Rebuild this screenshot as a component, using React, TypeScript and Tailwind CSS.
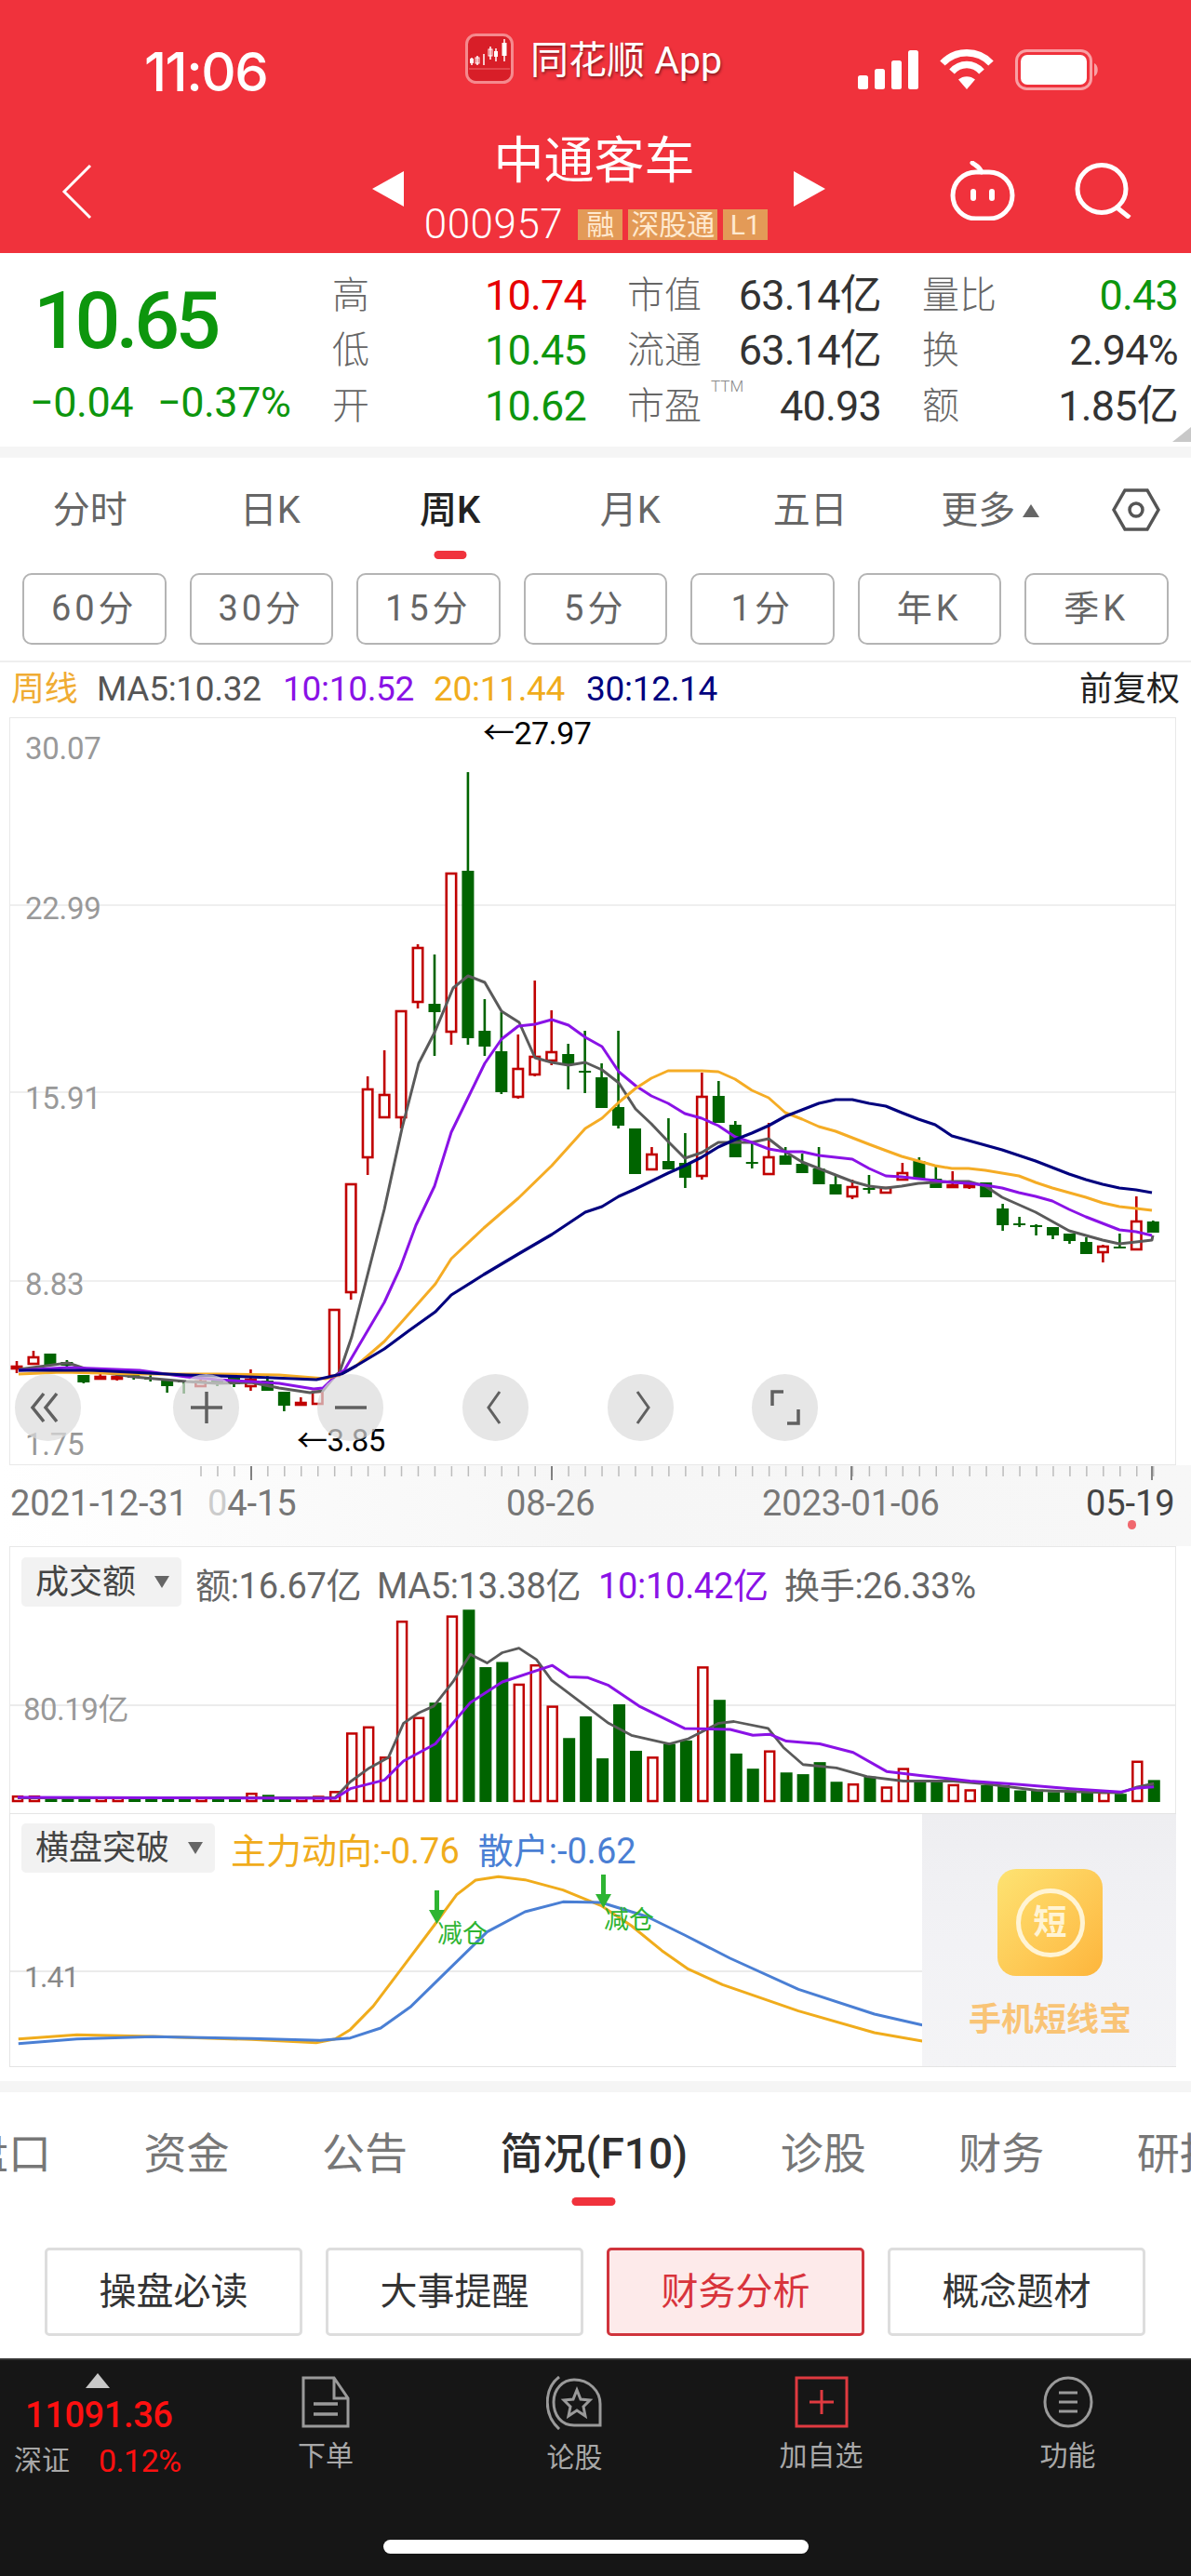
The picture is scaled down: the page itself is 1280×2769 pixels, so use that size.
import React from "react";

type C = [number, number, number, number, "r" | "g"];
const candles: C[] = [
  [1463, 1469, 1471, 1476, "r"], [1452, 1459, 1466, 1466, "r"], [1455, 1455, 1468, 1468, "g"], [1462, 1464, 1468, 1470, "g"],
  [1478, 1478, 1486, 1487, "g"], [1477, 1480, 1482, 1483, "r"], [1477, 1480, 1482, 1484, "r"], [1476, 1476, 1481, 1483, "g"],
  [1477, 1481, 1483, 1485, "g"], [1483, 1483, 1490, 1497, "g"], [1484, 1484, 1486, 1498, "g"], [1483, 1485, 1490, 1491, "r"],
  [1483, 1484, 1486, 1490, "g"], [1480, 1480, 1488, 1491, "g"], [1472, 1483, 1490, 1495, "r"], [1477, 1484, 1495, 1495, "g"],
  [1496, 1496, 1511, 1517, "g"], [1502, 1508, 1510, 1510, "r"], [1496, 1496, 1509, 1509, "r"], [1408, 1408, 1479, 1479, "r"],
  [1273, 1273, 1389, 1397, "r"], [1157, 1171, 1244, 1263, "r"], [1129, 1177, 1201, 1201, "r"], [1087, 1087, 1201, 1213, "r"],
  [1015, 1019, 1077, 1084, "r"], [1026, 1079, 1088, 1135, "g"], [939, 939, 1109, 1123, "r"], [830, 936, 1116, 1123, "g"],
  [1074, 1108, 1125, 1135, "g"], [1088, 1130, 1174, 1176, "g"], [1112, 1149, 1179, 1181, "r"], [1054, 1136, 1155, 1157, "r"],
  [1086, 1131, 1140, 1145, "r"], [1122, 1133, 1145, 1171, "g"], [1108, 1151, 1153, 1175, "g"], [1143, 1158, 1191, 1191, "g"],
  [1108, 1190, 1210, 1213, "g"], [1213, 1213, 1262, 1262, "g"], [1233, 1241, 1257, 1257, "r"], [1202, 1248, 1257, 1257, "g"],
  [1218, 1250, 1266, 1277, "g"], [1153, 1179, 1264, 1268, "r"], [1162, 1178, 1207, 1207, "g"], [1205, 1209, 1244, 1244, "g"],
  [1228, 1249, 1251, 1256, "g"], [1207, 1244, 1262, 1263, "r"], [1233, 1242, 1252, 1252, "g"], [1240, 1251, 1261, 1261, "g"],
  [1233, 1256, 1273, 1273, "g"], [1263, 1273, 1284, 1284, "g"], [1268, 1276, 1286, 1289, "r"], [1263, 1277, 1279, 1283, "g"],
  [1277, 1277, 1282, 1283, "r"], [1250, 1261, 1268, 1269, "r"], [1244, 1248, 1267, 1267, "g"], [1254, 1267, 1277, 1277, "g"],
  [1259, 1274, 1276, 1276, "r"], [1272, 1274, 1276, 1278, "r"], [1271, 1271, 1287, 1287, "g"], [1294, 1299, 1317, 1323, "g"],
  [1308, 1315, 1317, 1319, "g"], [1316, 1317, 1319, 1328, "g"], [1319, 1319, 1328, 1332, "g"], [1326, 1326, 1334, 1337, "g"],
  [1330, 1335, 1348, 1348, "g"], [1338, 1340, 1346, 1357, "r"], [1326, 1340, 1342, 1342, "g"], [1286, 1313, 1343, 1343, "r"],
  [1312, 1313, 1325, 1325, "g"],
];

const ma5 = [[20,1472],[73,1465],[97,1473],[143,1480],[200,1485],[233,1487],[270,1486],[300,1492],[333,1497],[347,1495],[360,1479],[365,1475],[378,1437],[413,1300],[432,1213],[450,1143],[467,1110],[487,1062],[503,1049],[521,1056],[539,1087],[558,1099],[575,1137],[593,1142],[611,1145],[629,1142],[647,1150],[665,1164],[683,1192],[700,1208],[718,1227],[736,1245],[754,1239],[772,1228],[790,1228],[808,1228],[826,1224],[844,1238],[862,1249],[880,1256],[898,1263],[916,1270],[934,1275],[952,1277],[969,1275],[987,1272],[1005,1271],[1023,1270],[1041,1270],[1059,1275],[1077,1287],[1095,1295],[1113,1303],[1131,1313],[1149,1323],[1167,1328],[1185,1333],[1203,1337],[1221,1335],[1238,1333],[1239,1328]];
const ma10 = [[20,1473],[73,1470],[100,1471],[150,1473],[200,1480],[233,1483],[270,1485],[300,1487],[337,1493],[347,1492],[363,1477],[370,1473],[413,1400],[430,1363],[447,1317],[467,1275],[485,1217],[503,1180],[521,1143],[539,1117],[557,1103],[575,1101],[593,1096],[611,1102],[629,1115],[647,1125],[665,1152],[683,1167],[700,1178],[718,1186],[736,1197],[754,1202],[772,1210],[790,1222],[808,1228],[826,1235],[844,1238],[862,1238],[880,1242],[898,1244],[916,1246],[934,1256],[952,1264],[969,1265],[987,1267],[1005,1269],[1023,1271],[1041,1272],[1059,1274],[1077,1277],[1095,1282],[1113,1286],[1131,1291],[1149,1300],[1167,1308],[1185,1315],[1203,1322],[1221,1324],[1238,1328]];
const ma20 = [[20,1477],[67,1475],[150,1477],[233,1477],[300,1478],[350,1482],[367,1477],[383,1468],[413,1442],[430,1423],[468,1380],[485,1353],[520,1320],[557,1288],[593,1253],[629,1213],[647,1202],[665,1185],[683,1170],[700,1159],[718,1151],[736,1151],[754,1151],[772,1152],[790,1160],[808,1172],[826,1180],[844,1196],[862,1203],[880,1211],[898,1216],[916,1223],[934,1230],[950,1236],[969,1243],[987,1248],[1005,1253],[1023,1256],[1041,1256],[1059,1258],[1077,1261],[1095,1264],[1113,1271],[1131,1277],[1149,1282],[1167,1287],[1185,1293],[1203,1297],[1221,1299],[1238,1301]];
const ma30 = [[20,1473],[100,1473],[200,1478],[267,1480],[340,1483],[367,1477],[383,1468],[413,1450],[440,1430],[468,1410],[485,1392],[520,1370],[557,1348],[593,1327],[629,1303],[647,1297],[665,1286],[683,1278],[718,1261],[736,1253],[754,1244],[772,1233],[790,1225],[808,1218],[826,1210],[844,1200],[862,1193],[880,1186],[898,1182],[916,1182],[934,1186],[952,1189],[969,1196],[987,1203],[1005,1209],[1023,1221],[1041,1226],[1059,1231],[1077,1236],[1095,1242],[1113,1248],[1131,1255],[1149,1262],[1167,1268],[1185,1273],[1203,1277],[1221,1279],[1238,1282]];

const vols: [number, "r" | "g"][] = [
  [1433,"r"],[1433,"r"],[1435,"g"],[1435,"g"],[1437,"g"],[1436,"r"],[1436,"r"],[1437,"g"],[1437,"g"],[1437,"g"],[1437,"g"],[1437,"r"],[1437,"g"],[1437,"g"],[1425,"r"],[1428,"g"],[1434,"g"],[1436,"r"],[1434,"r"],[1420,"r"],
  [1250,"r"],[1232,"r"],[1320,"r"],[925,"r"],[1205,"r"],[1160,"g"],[910,"r"],[890,"g"],[1057,"g"],[1042,"g"],[1108,"r"],[1052,"r"],[1172,"r"],[1263,"g"],[1200,"g"],[1322,"g"],[1165,"g"],[1300,"g"],[1320,"r"],[1280,"g"],[1270,"g"],[1058,"r"],[1152,"g"],[1308,"g"],[1352,"g"],[1302,"r"],[1363,"g"],[1368,"g"],[1333,"g"],[1390,"g"],[1398,"r"],[1375,"g"],[1407,"r"],[1353,"r"],[1390,"g"],[1385,"g"],[1400,"r"],[1415,"r"],[1400,"g"],[1400,"g"],[1415,"g"],[1413,"g"],[1420,"g"],[1415,"g"],[1420,"g"],[1422,"r"],[1425,"g"],[1332,"r"],[1385,"g"],
];
const volGray = [[22,1437],[440,1436],[460,1390],[485,1350],[510,1320],[530,1220],[550,1190],[570,1170],[595,1100],[618,1020],[640,1045],[660,1015],[682,1002],[705,1035],[725,1095],[770,1170],[800,1220],[830,1255],[880,1280],[905,1265],[945,1220],[965,1215],[1010,1235],[1030,1290],[1056,1340],[1100,1350],[1140,1375],[1188,1388],[1254,1388],[1300,1397],[1364,1415],[1430,1420],[1474,1422],[1496,1405],[1518,1395]];
const volPurple = [[22,1435],[440,1438],[460,1410],[505,1385],[530,1330],[572,1280],[618,1160],[660,1100],[726,1052],[748,1085],[772,1087],[800,1110],[840,1170],[900,1235],[960,1238],[990,1255],[1012,1252],[1034,1272],[1078,1280],[1122,1305],[1166,1360],[1210,1372],[1276,1388],[1342,1398],[1408,1410],[1474,1420],[1496,1408],[1518,1405]];
const indOrange = [[23,725],[100,712],[200,717],[330,727],[415,737],[440,725],[460,695],[490,620],[530,490],[570,360],[600,260],[625,213],[655,202],[690,212],[740,245],[790,295],[830,360],[870,440],[905,500],[950,550],[1050,635],[1150,705],[1213,732]];
const indBlue = [[23,740],[100,725],[200,718],[330,724],[420,730],[460,722],[500,690],[540,620],[590,500],[640,380],[690,315],[740,283],[790,285],[850,330],[900,390],[960,465],[1050,565],[1150,645],[1213,680]];

const pts = (a: number[][]) => a.map((p) => p.join(",")).join(" ");
const vp = (a: number[][]) => pts(a.map(([x, y]) => [x / 1.225, 1400 + y / 2.703]));
const ip = (a: number[][]) => pts(a.map(([x, y]) => [x / 1.225, 1950 + y / 3]));
const RED = "#c00000";
const GREEN = "#006400";
const cx = (i: number) => 18 + 17.96 * i;

function Header() {
  return (
    <header className="h-[272px] bg-[#f0323c] text-white">
      <div className="h-[135px] flex items-start">
        <div className="ml-[155px] w-[135px] mt-[47px] text-[58px] leading-[60px] font-medium tracking-[-1.5px] font-['Inter','Noto_Sans_CJK_SC',sans-serif] whitespace-nowrap">11:06</div>
        <svg className="ml-[210px] mt-[36px] w-[52px] h-[54px]" viewBox="0 0 52 54">
          <rect x="1.5" y="1.5" width="49" height="51" rx="10" fill="#d81e28" stroke="#f58a8e" strokeWidth="3" />
          <path d="M4 38 H48" stroke="#f26a70" strokeWidth="1" />
          <path d="M7 26v8M13 24v10M20 22v12M27 14v14M33 16v14M42 6v24" stroke="#fff" strokeWidth="1.5" />
          <rect x="5" y="27" width="4" height="5" fill="#fff" /><rect x="11" y="26" width="4" height="6" fill="none" stroke="#fff" /><rect x="25" y="17" width="4" height="7" fill="none" stroke="#fff" /><rect x="31" y="19" width="4" height="6" fill="#fff" /><rect x="39.5" y="10" width="5" height="14" fill="#fff" />
        </svg>
        <div className="ml-[18px] mt-[40px] text-[41px] leading-[50px] [text-shadow:1px_2px_3px_rgba(0,0,0,0.45)] whitespace-nowrap">同花顺 App</div>
        <svg className="absolute left-[922px] top-[54px] w-[66px] h-[42px]" viewBox="0 0 66 42" fill="#fff">
          <rect x="0" y="27" width="11" height="15" rx="2.5" /><rect x="18" y="20" width="11" height="22" rx="2.5" /><rect x="36" y="11" width="11" height="31" rx="2.5" /><rect x="54" y="0" width="11" height="42" rx="2.5" />
        </svg>
        <svg className="absolute left-[1009px] top-[52px] w-[60px] h-[44px]" viewBox="0 0 60 44" fill="none" stroke="#fff" strokeWidth="7.5">
          <path d="M4 16 C18 1 42 1 56 16" /><path d="M14 25 C23 15 37 15 46 25" /><path d="M30 44 L21 33.5 C26 29 34 29 39 33.5 Z" fill="#fff" stroke="none" />
        </svg>
        <svg className="absolute left-[1091px] top-[53px] w-[93px] h-[44px]" viewBox="0 0 93 44">
          <rect x="1.5" y="1.5" width="80" height="41" rx="11" fill="none" stroke="#f9a0a4" strokeWidth="3" />
          <rect x="6" y="6" width="71" height="32" rx="7" fill="#fff" />
          <path d="M85 15 C90 17 90 27 85 29 Z" fill="#f9a0a4" />
        </svg>
      </div>
      <div className="h-[137px] flex items-start">
        <svg className="ml-[66px] mt-[41px] w-[34px] h-[60px]" viewBox="0 0 34 60" fill="none" stroke="#fff" strokeWidth="3">
          <path d="M31 2 L3 30 L31 58" />
        </svg>
        <svg className="ml-[300px] mt-[49px] w-[34px] h-[38px]" viewBox="0 0 34 38" fill="#fff"><path d="M34 0 V38 L0 19 Z" /></svg>
        <div className="w-[419px] flex flex-col items-center">
          <div className="text-[54px] leading-[72px] mt-[3px] ml-[-10px]">中通客车</div>
          <div className="flex items-center mt-[13px] h-[36px] ml-[-6px] whitespace-nowrap">
            <span className="text-[44px] leading-[36px] font-light tracking-[0.5px] mr-[16px]">000957</span>
            <span className="h-[33px] bg-[#e39a57] text-[#ffe9cf] text-[30px] leading-[33px] mr-[6px] w-[48px] text-center">融</span>
            <span className="h-[33px] bg-[#e39a57] text-[#ffe9cf] text-[30px] leading-[33px] mr-[6px] w-[96px] text-center">深股通</span>
            <span className="h-[33px] bg-[#e39a57] text-[#ffe9cf] text-[30px] leading-[33px] w-[48px] text-center">L1</span>
          </div>
        </div>
        <svg className="mt-[49px] w-[34px] h-[38px]" viewBox="0 0 34 38" fill="#fff"><path d="M0 0 V38 L34 19 Z" /></svg>
        <svg className="ml-[134px] mt-[38px] w-[70px] h-[64px]" viewBox="0 0 70 64" fill="none" stroke="#fff" strokeWidth="5">
          <path d="M24 2 C26 4 31 5 34 12" strokeLinecap="round" />
          <rect x="3" y="12" width="64" height="50" rx="25" />
          <rect x="22" y="30" width="6" height="13" rx="3" fill="#fff" stroke="none" />
          <rect x="42" y="30" width="6" height="13" rx="3" fill="#fff" stroke="none" />
        </svg>
        <svg className="ml-[64px] mt-[40px] w-[62px] h-[60px]" viewBox="0 0 62 60" fill="none" stroke="#fff" strokeWidth="5">
          <ellipse cx="29" cy="28" rx="26" ry="25.5" /><path d="M44 47 L59 59" />
        </svg>
      </div>
    </header>
  );
}

function Row({ label, value, color, extra }: { label: string; value: string; color: string; extra?: boolean }) {
  return (
    <div className="flex items-center justify-between h-[59.5px]">
      <span className="relative text-[40px] leading-[60px] text-[#666] font-light whitespace-nowrap">
        {label}
        {extra && <span className="absolute left-[90px] top-[-2px] text-[17px] leading-[20px] text-[#888]">TTM</span>}
      </span>
      <span className={`text-[45px] leading-[60px] tracking-[-0.8px] whitespace-nowrap ${color}`}>{value}</span>
    </div>
  );
}

function Quote() {
  const G = "text-[#0d960d]";
  const D = "text-[#333]";
  return (
    <section className="relative h-[208px] flex bg-white">
      <div className="w-[357px] pl-[32px]">
        <div className="mt-[29px] ml-[4px] text-[86px] leading-[88px] font-medium tracking-[-4.5px] text-[#0d960d]">10.65</div>
        <div className="mt-[19px] flex gap-[26px] text-[45px] leading-[50px] text-[#0d960d] tracking-[-0.5px] whitespace-nowrap">
          <span>−0.04</span><span>−0.37%</span>
        </div>
      </div>
      <div className="pt-[16px] grid grid-cols-[273px_273px_275px] gap-x-[44px] auto-rows-[59.5px]">
        <Row label="高" value="10.74" color="text-[#e60000]" />
        <Row label="市值" value="63.14亿" color={D} />
        <Row label="量比" value="0.43" color={G} />
        <Row label="低" value="10.45" color={G} />
        <Row label="流通" value="63.14亿" color={D} />
        <Row label="换" value="2.94%" color={D} />
        <Row label="开" value="10.62" color={G} />
        <Row label="市盈" value="40.93" color={D} extra />
        <Row label="额" value="1.85亿" color={D} />
      </div>
      <svg className="absolute right-0 bottom-[5px] w-[20px] h-[16px]" viewBox="0 0 20 16"><path d="M20 0 V16 H0 Z" fill="#c8c8c8" /></svg>
    </section>
  );
}

function Tabs() {
  const tabs = ["分时", "日K", "周K", "月K", "五日"];
  const btns = ["60分", "30分", "15分", "5分", "1分", "年K", "季K"];
  return (
    <section className="bg-white">
      <div className="h-[124px] grid grid-cols-[repeat(6,193.5px)_1fr] pt-[32px]">
        {tabs.map((t) => (
          <div key={t} className={`relative h-[50px] text-center text-[40px] leading-[50px] ${t === "周K" ? "text-[#222] font-medium" : "text-[#666]"}`}>
            {t}
            {t === "周K" && <div className="absolute left-1/2 -translate-x-1/2 top-[68px] w-[35px] h-[9px] rounded-full bg-[#f0323c]" />}
          </div>
        ))}
        <div className="h-[50px] text-center text-[40px] leading-[50px] text-[#666] flex items-center justify-center">
          更多<svg className="ml-[8px] w-[18px] h-[14px]" viewBox="0 0 18 14"><path d="M9 0 L18 14 H0 Z" fill="#666" /></svg>
        </div>
        <div className="flex justify-center">
          <svg className="w-[52px] h-[46px] mt-[1px]" viewBox="0 0 52 46" fill="none" stroke="#555" strokeWidth="3.5">
            <path d="M14 2 H38 L50 23 L38 44 H14 L2 23 Z" /><circle cx="26" cy="23" r="7" />
          </svg>
        </div>
      </div>
      <div className="flex pl-[24px] gap-[25px]">
        {btns.map((b) => (
          <div key={b} className="w-[154.5px] h-[77px] rounded-[10px] border-2 border-[#b4b4b4] flex items-center justify-center text-[38px] text-[#666] tracking-[4px]">{b}</div>
        ))}
      </div>
      <div className="h-[17px]" />
      <div className="h-[2px] bg-[#eeeeee]" />
    </section>
  );
}

function InfoRow() {
  return (
    <div className="h-[59px] bg-white flex items-center pl-[12px] pr-[12px] text-[37px] tracking-[-0.3px] whitespace-nowrap pb-[2px]">
      <span className="text-[#f0ac33] w-[92px] text-[36px]">周线</span>
      <span className="text-[#555] w-[200px]">MA5:10.32</span>
      <span className="text-[#8a12e6] w-[162px]">10:10.52</span>
      <span className="text-[#f0ac1c] w-[164px]">20:11.44</span>
      <span className="text-[#00007e] w-[530px]">30:12.14</span>
      <span className="text-[#222] tracking-normal text-[36px]">前复权</span>
    </div>
  );
}

function Grey({ top, left, children }: { top: number; left: number; children: React.ReactNode }) {
  return <span style={{ top, left }} className="absolute text-[33px] leading-[40px] text-[#999] tracking-[-0.3px]">{children}</span>;
}

function RoundBtn({ left, children }: { left: number; children: React.ReactNode }) {
  return (
    <div style={{ left }} className="absolute top-[705px] w-[71px] h-[72px] rounded-full bg-[#dcdcdc]/70 flex items-center justify-center">
      <svg className="w-[46px] h-[46px]" viewBox="0 0 46 46" fill="none" stroke="#606060" strokeWidth="3.5">{children}</svg>
    </div>
  );
}

function MainChart() {
  return (
    <div className="relative ml-[10px] w-[1254px] h-[804px] border border-[#e8e8e8] bg-white">
      <svg className="absolute inset-0" width="1252" height="802" viewBox="11 772 1252 802">
        {[973, 1174, 1377].map((y) => <line key={y} x1="10" x2="1264" y1={y} y2={y} stroke="#eaeaea" strokeWidth="1.5" />)}
        {candles.map(([hi, t, b, lo, c], i) => {
          const x = cx(i);
          const col = c === "r" ? RED : GREEN;
          return (
            <g key={i}>
              <line x1={x} x2={x} y1={hi} y2={lo} stroke={col} strokeWidth="2.6" />
              {c === "r"
                ? <rect x={x - 5.2} y={t} width="10.4" height={Math.max(b - t, 1)} fill="#fff" stroke={col} strokeWidth="2.6" />
                : <rect x={x - 6.5} y={t} width="13" height={Math.max(b - t, 2)} fill={col} />}
            </g>
          );
        })}
        <polyline points={pts(ma5)} fill="none" stroke="#5a5a5a" strokeWidth="3" strokeLinejoin="round" />
        <polyline points={pts(ma10)} fill="none" stroke="#8a12e6" strokeWidth="3" strokeLinejoin="round" />
        <polyline points={pts(ma20)} fill="none" stroke="#f5ac25" strokeWidth="3" strokeLinejoin="round" />
        <polyline points={pts(ma30)} fill="none" stroke="#00007e" strokeWidth="3.2" strokeLinejoin="round" />
      </svg>
      <Grey top={13} left={16}>30.07</Grey>
      <Grey top={185} left={16}>22.99</Grey>
      <Grey top={389} left={16}>15.91</Grey>
      <Grey top={589} left={16}>8.83</Grey>
      <Grey top={761} left={16}>1.75</Grey>
      <span className="absolute left-[508px] top-0 text-[34px] leading-[32px] text-black tracking-[-0.5px]">←27.97</span>
      <span className="absolute left-[308px] top-[757px] text-[33px] leading-[40px] text-black tracking-[-0.5px]">←3.85</span>
      <RoundBtn left={5}><path d="M18 8 L6 23 L18 38 M32 8 L20 23 L32 38" /></RoundBtn>
      <RoundBtn left={175}><path d="M23 6 V40 M6 23 H40" /></RoundBtn>
      <RoundBtn left={330}><path d="M6 23 H40" /></RoundBtn>
      <RoundBtn left={486}><path d="M27 6 L15 23 L27 40" strokeWidth="3" /></RoundBtn>
      <RoundBtn left={642}><path d="M19 6 L31 23 L19 40" strokeWidth="3" /></RoundBtn>
      <RoundBtn left={797}><path d="M21 6 H9 V21 M25 40 H37 V25" /></RoundBtn>
    </div>
  );
}

function Axis() {
  const ticks = Array.from({ length: 58 }, (_, i) => 216 + 17.96 * i).filter((x) => x < 1240);
  return (
    <div className="relative h-[87px] bg-linear-to-r from-white via-[#f6f6f6] to-[#f7f7f7]">
      <svg className="absolute left-0 top-0" width="1280" height="20" viewBox="0 0 1280 20">
        {ticks.map((x) => <line key={x} x1={x} x2={x} y1="1" y2="12" stroke="#bcbcbc" strokeWidth="1.5" />)}
        {[270, 593, 915, 1238].map((x) => <line key={x} x1={x} x2={x} y1="1" y2="16" stroke="#777" strokeWidth="1.8" />)}
      </svg>
      <div className="grid grid-cols-[212px_321px_275px_348px_1fr] pl-[11px] pt-[21px] text-[38px] leading-[40px] text-[#777] tracking-[-0.1px] whitespace-nowrap">
        <span>2021-12-31</span><span><span className="text-[#ccc]">0</span>4-15</span><span>08-26</span><span>2023-01-06</span><span className="text-[#444]">05-19</span>
      </div>
      <div className="absolute left-[1212px] top-[59px] w-[9px] h-[10px] rounded-full bg-[#f0686e]" />
    </div>
  );
}

function Chip({ children, w }: { children: React.ReactNode; w: string }) {
  return (
    <div className={`relative h-[53px] ${w} bg-[#f2f2f2] rounded-[5px] flex items-center pl-[15px] text-[36px] text-[#444] whitespace-nowrap`}>
      {children}
      <svg className="absolute right-[13px] top-[20px] w-[16px] h-[13px]" viewBox="0 0 16 13"><path d="M0 0 H16 L8 13 Z" fill="#666" /></svg>
    </div>
  );
}

function VolumeChart() {
  return (
    <div className="relative ml-[10px] w-[1254px] h-[287px] border-t border-x border-[#e8e8e8] bg-white overflow-hidden">
      <svg className="absolute inset-0" width="1254" height="287" viewBox="10 1662 1254 287">
        <line x1="10" x2="1264" y1="1832" y2="1832" stroke="#e6e6e6" strokeWidth="1.5" />
        {vols.map(([z, c], i) => {
          const x = cx(i);
          const top = 1400 + z / 2.703;
          return c === "r"
            ? <rect key={i} x={x - 5} y={top} width="10" height={1935 - top} fill="#fff" stroke={RED} strokeWidth="2.5" />
            : <rect key={i} x={x - 6.5} y={top} width="13" height={1936 - top} fill={GREEN} />;
        })}
        <polyline points={vp(volGray)} fill="none" stroke="#5a5a5a" strokeWidth="2.8" strokeLinejoin="round" />
        <polyline points={vp(volPurple)} fill="none" stroke="#8a12e6" strokeWidth="3" strokeLinejoin="round" />
      </svg>
      <div className="relative flex items-start pl-[12px] pt-[11px]">
        <Chip w="w-[172px]">成交额</Chip>
        <div className="ml-[15px] mt-[6px] flex text-[38px] leading-[50px] tracking-[-0.3px] text-[#666] whitespace-nowrap">
          <span className="w-[195px]">额:16.67亿</span><span className="w-[238px]">MA5:13.38亿</span><span className="w-[200px] text-[#8a12e6]">10:10.42亿</span><span>换手:26.33%</span>
        </div>
      </div>
      <span className="absolute left-[14px] top-[155px] text-[33px] leading-[40px] text-[#999] tracking-[-0.5px]">80.19亿</span>
    </div>
  );
}

function IndicatorChart() {
  return (
    <div className="relative ml-[10px] w-[1254px] h-[273px] border-y border-l border-[#e4e4e4] bg-white overflow-hidden">
      <svg className="absolute inset-0" width="1254" height="273" viewBox="10 1950 1254 273">
        <line x1="10" x2="1264" y1="2119" y2="2119" stroke="#e4e4e4" strokeWidth="1.5" />
        <polyline points={ip(indOrange)} fill="none" stroke="#f0ac1c" strokeWidth="3" strokeLinejoin="round" />
        <polyline points={ip(indBlue)} fill="none" stroke="#4a7fd4" strokeWidth="3" strokeLinejoin="round" />
        <path d="M466 2032 h5 v21 h6 l-8.5 15 l-8.5 -15 h6 Z" fill="#2eb432" />
        <path d="M645 2015 h5 v21 h6 l-8.5 15 l-8.5 -15 h6 Z" fill="#2eb432" />
      </svg>
      <div className="relative flex items-start pl-[12px] pt-[10px]">
        <Chip w="w-[208px]">横盘突破</Chip>
        <div className="ml-[17px] mt-[5px] flex gap-[20px] text-[38px] leading-[50px] tracking-[0px] whitespace-nowrap">
          <span className="text-[#f0ac1c]">主力动向:-0.76</span><span className="text-[#4a7fd4]">散户:-0.62</span>
        </div>
      </div>
      <span className="absolute left-[459px] top-[114px] text-[27px] leading-[30px] text-[#2eb432]">减仓</span>
      <span className="absolute left-[638px] top-[99px] text-[27px] leading-[30px] text-[#2eb432]">减仓</span>
      <span className="absolute left-[15px] top-[155px] text-[32px] leading-[40px] text-[#888] tracking-[-1px]">1.41</span>
      <div className="absolute left-[980px] top-0 bottom-0 w-[275px] bg-linear-to-b from-[#eeeef1] via-[#f2f2f5] to-[#f4f4f6] flex flex-col items-center">
        <div className="mt-[59px] w-[113px] h-[115px] rounded-[20px] bg-linear-to-br from-[#fde372] to-[#fdb53b] flex items-center justify-center">
          <div className="w-[74px] h-[74px] rounded-full border-[5px] border-[#fff4d4] flex items-center justify-center text-[36px] font-bold text-[#fff4d4]">短</div>
        </div>
        <div className="mt-[26px] text-[35px] leading-[44px] font-bold text-[#f9c476] whitespace-nowrap">手机短线宝</div>
      </div>
    </div>
  );
}

function F10() {
  const items = ["盘口", "资金", "公告", "简况(F10)", "诊股", "财务", "研报"];
  const btns = ["操盘必读", "大事提醒", "财务分析", "概念题材"];
  return (
    <section className="bg-white">
      <div className="h-[167px] overflow-hidden">
        <div className="flex gap-[99.5px] ml-[-37px] pt-[36px] text-[46px] leading-[60px] whitespace-nowrap w-[1400px]">
          {items.map((t) => (
            <div key={t} className={`relative ${t === "简况(F10)" ? "text-[#2e2e2e] font-medium" : "text-[#777]"}`}>
              {t}
              {t === "简况(F10)" && <div className="absolute left-1/2 -translate-x-1/2 top-[77px] w-[47px] h-[9px] rounded-full bg-[#f0323c]" />}
            </div>
          ))}
        </div>
      </div>
      <div className="flex pl-[48px] gap-[25px]">
        {btns.map((b) => (
          <div key={b} className={`w-[277px] h-[95px] rounded-[5px] border-[3px] flex items-center justify-center text-[40px] ${b === "财务分析" ? "border-[#d0343c] bg-[#fdeaea] text-[#d8343c]" : "border-[#dddddd] text-[#333]"}`}>{b}</div>
        ))}
      </div>
      <div className="h-[24px]" />
    </section>
  );
}

function BottomItem({ label, children, w, h }: { label: string; children: React.ReactNode; w: number; h: number }) {
  return (
    <div className="flex flex-col items-center pt-[17px]">
      <svg width={w} height={h} viewBox={`0 0 ${w} ${h}`} fill="none">{children}</svg>
      <span className="mt-[11px] text-[30px] leading-[38px] text-[#a8a8a8]">{label}</span>
    </div>
  );
}

function BottomBar() {
  const g = "#9a9a9a";
  return (
    <footer className="h-[234px] bg-[#161616] border-t-2 border-[#333]">
      <div className="h-[193px] grid grid-cols-[215px_270px_265px_265px_265px]">
        <div className="flex flex-col pl-[15px]">
          <svg className="ml-[77px] mt-[14px] w-[26px] h-[16px]" viewBox="0 0 26 16"><path d="M13 0 L26 16 H0 Z" fill="#c8c8c8" /></svg>
          <div className="ml-[12px] mt-[5px] text-[38px] leading-[48px] text-[#ff1010] tracking-[-0.4px] font-medium">11091.36</div>
          <div className="mt-[3px] flex items-center text-[30px] leading-[44px] whitespace-nowrap">
            <span className="text-[#a8a8a8] w-[91px]">深证</span>
            <span className="text-[#ff1010] text-[34px] tracking-[-0.5px]">0.12%</span>
          </div>
        </div>
        <BottomItem label="下单" w={52} h={56}>
          <path d="M2 2 H35 L50 24 V54 H2 Z M35 2 V24 H50" stroke={g} strokeWidth="3" />
          <path d="M13 30 H39 M13 41 H39" stroke={g} strokeWidth="3.5" />
        </BottomItem>
        <BottomItem label="论股" w={62} h={58}>
          <path d="M14 1 C-3 14 -3 42 14 57" stroke={g} strokeWidth="3" />
          <path d="M30 4 C46 4 58 16 58 30 V53 H30 C16 53 8 42 8 28 C8 14 18 4 30 4 Z" stroke={g} strokeWidth="3" />
          <path d="M33 15 L37 25 L47 26 L40 33 L42 43 L33 37 L24 43 L26 33 L19 26 L29 25 Z" stroke={g} strokeWidth="3" />
        </BottomItem>
        <BottomItem label="加自选" w={58} h={56}>
          <rect x="2" y="2" width="54" height="52" stroke="#e03a40" strokeWidth="3" />
          <path d="M29 15 V41 M16 28 H42" stroke="#e03a40" strokeWidth="3" />
        </BottomItem>
        <BottomItem label="功能" w={54} h={56}>
          <ellipse cx="27" cy="28" rx="25" ry="26" stroke={g} strokeWidth="3" />
          <path d="M17 18 H37 M17 28 H37 M17 38 H37" stroke={g} strokeWidth="3" />
        </BottomItem>
      </div>
      <div className="mx-auto w-[457px] h-[15px] rounded-full bg-white" />
    </footer>
  );
}

export default function App() {
  return (
    <div className="relative w-[1280px] h-[2769px] overflow-hidden bg-white font-['Roboto','Noto_Sans_CJK_SC',sans-serif]">
      <Header />
      <Quote />
      <div className="h-[12px] bg-[#f5f5f5]" />
      <Tabs />
      <InfoRow />
      <MainChart />
      <Axis />
      <VolumeChart />
      <IndicatorChart />
      <div className="h-[15px] bg-white" />
      <div className="h-[12px] bg-[#f5f5f5]" />
      <F10 />
      <BottomBar />
    </div>
  );
}
